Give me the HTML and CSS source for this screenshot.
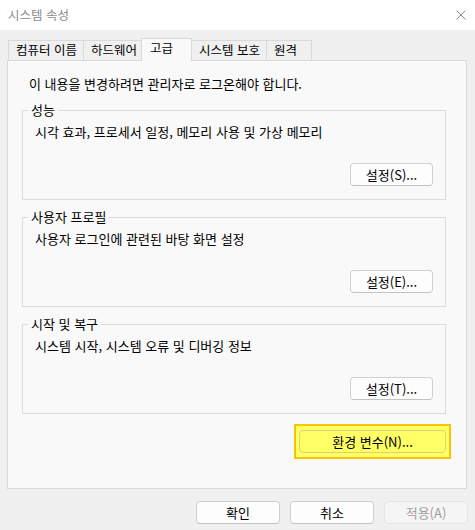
FILE: index.html
```html
<!DOCTYPE html>
<html lang="ko">
<head>
<meta charset="utf-8">
<title>시스템 속성</title>
<link rel="stylesheet" href="styles.css">
</head>
<body>
<div class="window">
  <div class="titlebar">
    <span class="title">시스템 속성</span>
    <svg class="close" width="10" height="10" viewBox="0 0 10 10" aria-hidden="true">
      <path d="M0.5 0.5 L9.5 9.5 M9.5 0.5 L0.5 9.5" stroke="#8a8a8a" stroke-width="1" fill="none"/>
    </svg>
  </div>
  <div class="body">
    <div class="tabs">
      <div class="tab">컴퓨터 이름</div>
      <div class="tab">하드웨어</div>
      <div class="tab active">고급</div>
      <div class="tab">시스템 보호</div>
      <div class="tab">원격</div>
    </div>
    <div class="panel">
      <p class="intro">이 내용을 변경하려면 관리자로 로그온해야 합니다.</p>
      <fieldset class="group">
        <legend>성능</legend>
        <p class="desc">시각 효과, 프로세서 일정, 메모리 사용 및 가상 메모리</p>
        <div class="actions"><button class="btn">설정(S)...</button></div>
      </fieldset>
      <fieldset class="group">
        <legend>사용자 프로필</legend>
        <p class="desc">사용자 로그인에 관련된 바탕 화면 설정</p>
        <div class="actions"><button class="btn">설정(E)...</button></div>
      </fieldset>
      <fieldset class="group">
        <legend>시작 및 복구</legend>
        <p class="desc">시스템 시작, 시스템 오류 및 디버깅 정보</p>
        <div class="actions"><button class="btn">설정(T)...</button></div>
      </fieldset>
      <div class="env-row">
        <div class="highlight"><button class="btn env">환경 변수(N)...</button></div>
      </div>
    </div>
    <div class="footer">
      <button class="btn dlg">확인</button>
      <button class="btn dlg">취소</button>
      <button class="btn dlg" disabled>적용(A)</button>
    </div>
  </div>
</div>
</body>
</html>
```
FILE: styles.css
```css
* { box-sizing: border-box; }
html, body { margin: 0; padding: 0; }
body {
  width: 475px;
  height: 530px;
  overflow: hidden;
  background: #f0f0f0;
  font-family: "Noto Sans CJK KR", "Noto Sans", sans-serif;
  font-size: 13px;
  line-height: 16px;
  color: #000;
}
.window { width: 475px; height: 530px; display: flex; flex-direction: column; }
.titlebar {
  height: 30px;
  background: #fff;
  display: flex;
  align-items: center;
  justify-content: space-between;
  padding: 0 9px 0 8px;
}
.title { color: #8c8c8c; font-size: 12.5px; }
.close { display: block; margin-top: -1px; }

.body { padding: 0 8px 0 7px; display: flex; flex-direction: column; }

.tabs {
  display: flex;
  align-items: flex-end;
  height: 30px;
  padding-left: 1px;
}
.tab {
  height: 20px;
  min-width: 46px;
  padding: 1px 6px 0 7px;
  border: 1px solid #d9d9d9;
  border-bottom: none;
  margin-right: -1px;
  background: #f0f0f0;
  font-size: 12.5px;
  white-space: nowrap;
}
.tab.active {
  position: relative;
  z-index: 1;
  height: 23px;
  min-width: 51px;
  margin: 0 -2px -1px -2px;
  padding: 1px 8px 0 8px;
  background: #f9f9f9;
}
.tab.active + .tab { margin-left: 1px; }

.panel {
  height: 429px;
  border: 1px solid #d9d9d9;
  background: #f9f9f9;
  padding: 15px 20px 0 14px;
  display: flex;
  flex-direction: column;
}
.intro { margin: 0 0 0 7px; }

.group {
  margin: 10px 0 0 0;
  padding: 0 12px 13px 12px;
  border: 1px solid #dcdcdc;
  min-width: 0;
}
.group + .group { margin-top: 9px; }
.group legend { padding: 0 3px; margin-left: -7px; line-height: 16px; }
.desc { margin: 6px 0 0 0; }
.actions { display: flex; justify-content: flex-end; margin-top: 23px; }

.btn {
  font-family: inherit;
  font-size: 13px;
  line-height: 16px;
  color: #000;
  height: 23px;
  width: 83px;
  padding: 0;
  border: 1px solid #d0d0d0;
  border-bottom-color: #c2c2c2;
  border-radius: 4px;
  background: #fdfdfd;
}
.env-row { display: flex; justify-content: flex-end; margin: 10px -5px 0 0; }
.highlight {
  border: 2px solid #f7c600;
  background: #ffff66;
  padding: 4px 3px;
}
.btn.env {
  width: 147px;
  background: #ffff66;
  border-color: #d8d470;
}

.footer {
  display: flex;
  justify-content: flex-end;
  gap: 10px;
  margin: 12px -1px 0 0;
}
.btn.dlg { width: 84px; }
.btn.dlg:disabled {
  color: #a0a0a0;
  background: #f5f5f5;
  border-color: #e6e6e6;
}
```
